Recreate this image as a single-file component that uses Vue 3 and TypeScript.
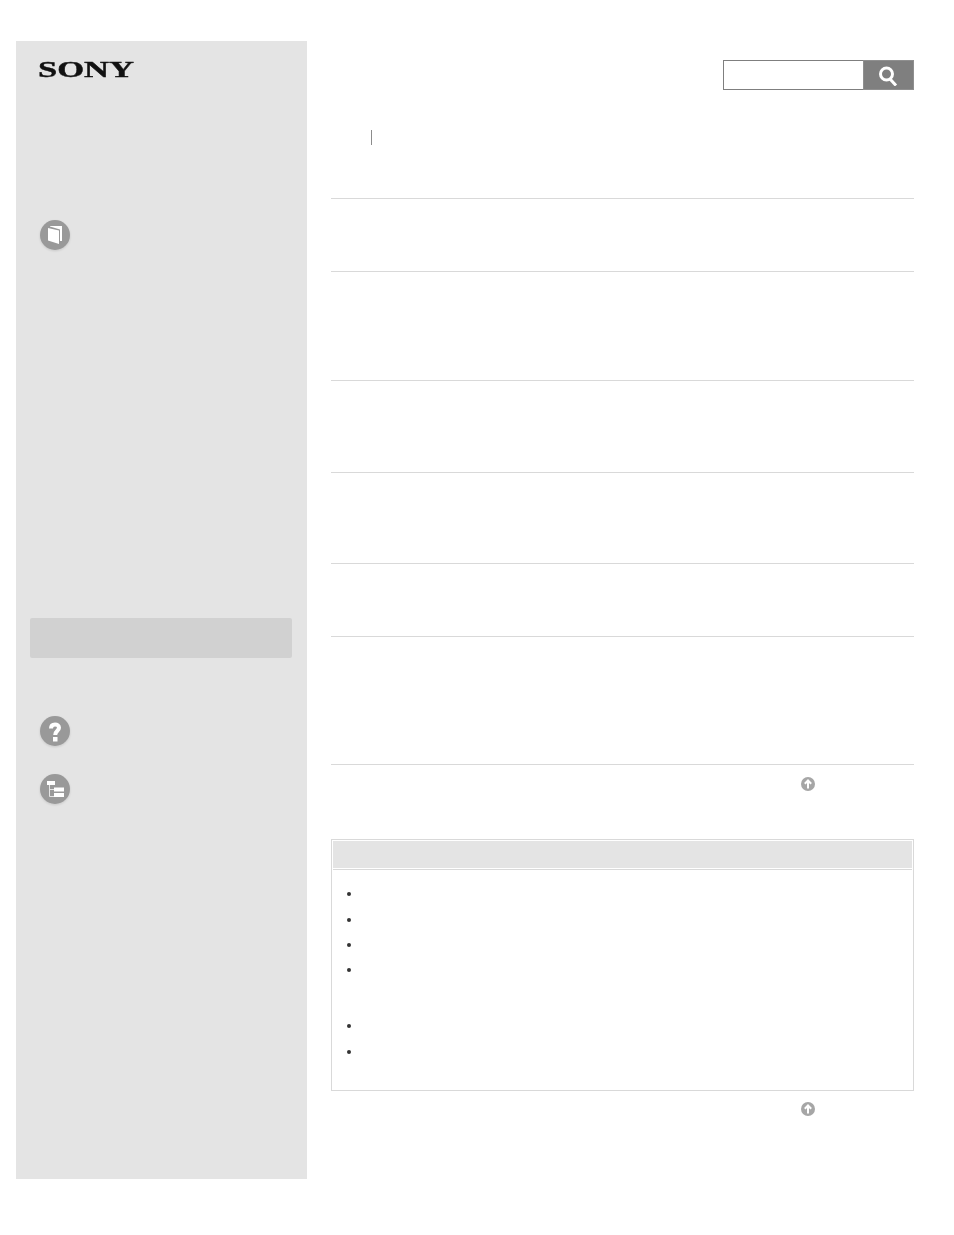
<script setup lang="ts">
// heights of the blank rows between the rules in the main column
const rows: number[] = [73, 109, 92, 91, 73, 128]

// distance from one bullet to the top of the next in the note box
const bullets: number[] = [0, 22, 21, 21, 52, 22]
</script>

<template>
  <div class="page">
    <aside class="sidebar">
      <div class="logo"><span class="logo-text">SONY</span></div>

      <div class="nav-icon book">
        <svg width="34" height="34" viewBox="0 0 34 34">
          <circle cx="17" cy="17" r="15" fill="#999" />
          <path d="M12 8h12v15h-2v-11.500l-10-3z" fill="#fff" />
          <path d="M10 10l11 2.500v13.500l-11-3.500z" fill="#fff" />
        </svg>
      </div>

      <div class="active-block"></div>

      <div class="nav-icon help">
        <svg width="34" height="34" viewBox="0 0 34 34">
          <circle cx="17" cy="17" r="15" fill="#999" />
          <path
            d="M13 14.500c0-2.800 1.800-4 4-4s4 1.200 4 3.300c0 3-3.800 3-3.800 7.200"
            fill="none"
            stroke="#fff"
            stroke-width="4"
          />
          <rect x="15" y="23" width="4.500" height="4.500" fill="#fff" />
        </svg>
      </div>

      <div class="nav-icon tree">
        <svg width="34" height="34" viewBox="0 0 34 34">
          <circle cx="17" cy="17" r="15" fill="#999" />
          <path d="M11.500 13v11.500h4.500M11.500 17.500h4.500" fill="none" stroke="#e4e4e4" stroke-width="1" />
          <rect x="9" y="9" width="8" height="4" fill="#fff" />
          <rect x="16" y="15.500" width="10" height="4" fill="#fff" />
          <rect x="16" y="21" width="10" height="4" fill="#fff" />
        </svg>
      </div>
    </aside>

    <main class="content">
      <div class="search">
        <div class="search-input"></div>
        <div class="search-button">
          <svg width="20" height="22" viewBox="0 0 20 22">
            <circle cx="7.500" cy="10" r="6" fill="none" stroke="#fff" stroke-width="3" />
            <path d="M11.500 15.500l5.500 6" stroke="#fff" stroke-width="3" fill="none" />
          </svg>
        </div>
      </div>

      <div class="crumb"><span class="crumb-bar"></span></div>

      <div class="row" v-for="(h, i) in rows" :key="i" :style="{ height: h + 'px' }"></div>

      <div class="top-link first">
        <svg width="14" height="14" viewBox="0 0 14 14">
          <circle cx="7" cy="7" r="7" fill="#a6a6a6" />
          <path d="M7 11.500v-8M3.800 6.800l3.200-3.300 3.200 3.300" fill="none" stroke="#fff" stroke-width="2" />
        </svg>
      </div>

      <section class="note">
        <div class="note-head"></div>
        <ul class="note-list">
          <li v-for="(gap, i) in bullets" :key="i" :style="{ marginTop: gap + 'px' }"></li>
        </ul>
      </section>

      <div class="top-link">
        <svg width="14" height="14" viewBox="0 0 14 14">
          <circle cx="7" cy="7" r="7" fill="#a6a6a6" />
          <path d="M7 11.500v-8M3.800 6.800l3.200-3.300 3.200 3.300" fill="none" stroke="#fff" stroke-width="2" />
        </svg>
      </div>
    </main>
  </div>
</template>

<style>
body {
  background: #fff;
}
</style>

<style scoped>
.page {
  display: flex;
  width: 954px;
  height: 1235px;
  padding: 41px 0 0 16px;
  box-sizing: border-box;
  overflow: hidden;
  font-family: "Liberation Sans", sans-serif;
}

.sidebar {
  width: 291px;
  height: 1138px;
  flex: none;
  background: #e4e4e4;
  padding: 0 15px 0 14px;
  box-sizing: border-box;
}

.logo {
  height: 177px;
  padding: 15px 0 0 9px;
  box-sizing: border-box;
}

.logo-text {
  display: block;
  margin-left: -1px;
  transform: scaleX(1.44);
  transform-origin: left top;
  font-family: "Liberation Serif", serif;
  font-weight: bold;
  font-size: 24px;
  line-height: 27px;
  color: #111;
  -webkit-text-stroke: 0.4px #111;
}

.nav-icon {
  width: 34px;
  height: 34px;
  margin-left: 8px;
  filter: drop-shadow(0 1px 1px rgba(0, 0, 0, 0.12));
}

.active-block {
  height: 40px;
  margin-top: 366px;
  background: #d1d1d1;
  border-radius: 2px;
}

.help {
  margin-top: 56px;
}

.tree {
  margin-top: 24px;
}

.content {
  width: 583px;
  margin-left: 24px;
  flex: none;
}

.search {
  display: flex;
  justify-content: flex-end;
  height: 30px;
  margin-top: 19px;
}

.search-input {
  width: 140px;
  height: 30px;
  box-sizing: border-box;
  background: #fff;
  border: 1px solid #7f7f7f;
  border-right: none;
}

.search-button {
  width: 51px;
  height: 30px;
  box-sizing: border-box;
  background: #7f7f7f;
  border: 1px solid #8f8f8f;
  display: flex;
  align-items: center;
  justify-content: center;
}

.crumb {
  height: 108px;
  padding: 40px 0 0 40px;
  box-sizing: border-box;
}

.crumb-bar {
  display: block;
  width: 1px;
  height: 15px;
  background: #8c8c8c;
}

.row {
  border-top: 1px solid #d9d9d9;
  box-sizing: border-box;
}

.top-link {
  display: flex;
  padding-left: 470px;
  height: 14px;
}

.top-link.first {
  border-top: 1px solid #d9d9d9;
  height: 75px;
  padding-top: 12px;
  box-sizing: border-box;
}

.note {
  height: 252px;
  border: 1px solid #d9d9d9;
  box-sizing: border-box;
  padding: 1px;
  margin-bottom: 11px;
}

.note-head {
  height: 27px;
  background: #e4e4e4;
  margin-bottom: 1px;
}

.note-list {
  list-style: none;
  margin: 0;
  padding: 22px 0 0 14px;
  border-top: 1px solid #d9d9d9;
}

.note-list li {
  width: 4px;
  height: 4px;
  border-radius: 50%;
  background: #333;
}
</style>
